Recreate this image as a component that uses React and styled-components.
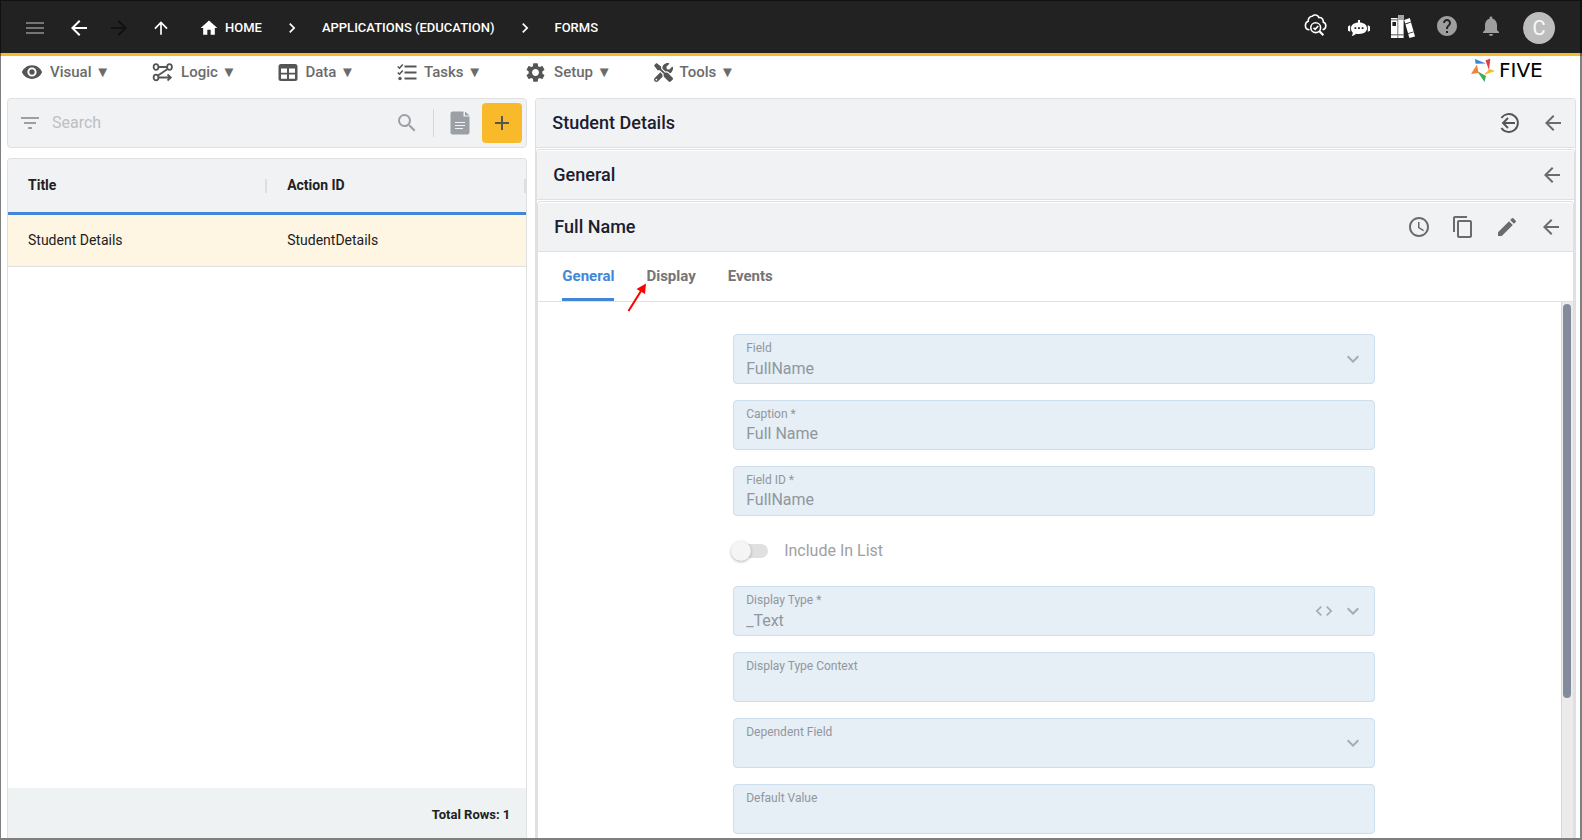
import React from 'react'
import styled, { createGlobalStyle } from 'styled-components'
import {
    MdMenu, MdArrowBack, MdArrowForward, MdArrowUpward, MdHome, MdChevronRight, MdHelp,
    MdNotifications, MdFilterList, MdSearch, MdAdd, MdAccessTime, MdContentCopy, MdEdit,
    MdExpandMore, MdCode, MdVisibility, MdSettings
} from 'react-icons/md'
import { FaTools } from 'react-icons/fa'

const GlobalStyle = createGlobalStyle`
    * {
        box-sizing: border-box;
    }
    body {
        margin: 0;
        background: #fff;
        font-family: Roboto, sans-serif;
        color: #212121;
    }
    button, input, select {
        font-family: inherit;
        margin: 0;
    }
    svg {
        display: block;
        flex-shrink: 0;
    }
`

const Page = styled.div`
    display: flex;
    flex-direction: column;
    height: 100vh;
    overflow: hidden;
    &::after {
        content: '';
        position: fixed;
        inset: 0;
        border: solid rgba(0, 0, 0, 0.5);
        border-width: 1px 2px 2px 1px;
        pointer-events: none;
    }
`

const TopBar = styled.header`
    display: flex;
    align-items: center;
    justify-content: space-between;
    height: 56px;
    flex-shrink: 0;
    padding: 2px 27px 0 23px;
    background: #222;
    border-bottom: 3px solid #f8b92b;
    color: #fff;
`

const NavIcons = styled.nav`
    display: flex;
    align-items: center;
    gap: 20px;
`

const HistoryIcons = styled.div`
    display: flex;
    gap: 16px;
`

const IconButton = styled.button`
    display: flex;
    align-items: center;
    justify-content: center;
    min-width: 20px;
    height: 24px;
    padding: 0;
    border: 0;
    background: none;
    color: ${props => props.$color || '#6b6b6b'};
`

const Crumbs = styled.div`
    display: flex;
    align-items: center;
    gap: 20px;
    padding-left: 8px;
`

const Crumb = styled.a`
    display: flex;
    align-items: center;
    gap: 6px;
    color: #fff;
    font-size: 13px;
    font-weight: 500;
    line-height: 20px;
    text-decoration: none;
`

const TopActions = styled.div`
    display: flex;
    align-items: center;
    gap: 20px;
`

const ActionIcons = styled.div`
    display: flex;
    gap: 20px;
    padding-bottom: 4px;
`

const Avatar = styled.button`
    width: 32px;
    height: 32px;
    padding: 0;
    border: 0;
    border-radius: 50%;
    background: #bdbdbd;
    color: #fafafa;
    font-size: 20px;
    line-height: 32px;
`

const MenuBar = styled.nav`
    display: flex;
    align-items: center;
    height: 34px;
    flex-shrink: 0;
    padding: 0 24px 2px 21px;
    gap: 42px;
`

const MenuButton = styled.button`
    display: flex;
    align-items: center;
    gap: 7px;
    padding: 0;
    border: 0;
    background: none;
    color: #6b6b6b;
    font-size: 15px;
    font-weight: 500;
    line-height: 20px;
    svg {
        color: #555;
    }
`

const Logo = styled.a`
    display: flex;
    align-items: center;
    gap: 4px;
    width: 87px;
    margin-left: auto;
    padding-bottom: 4px;
    color: #000;
    font-family: 'DejaVu Sans', sans-serif;
    font-size: 20px;
    line-height: 24px;
    text-decoration: none;
`

const Workspace = styled.main`
    display: grid;
    grid-template-columns: 1fr 2fr;
    gap: 8px;
    flex: 1;
    min-height: 0;
    padding: 8px 6px 2px 7px;
`

const ListSide = styled.section`
    display: flex;
    flex-direction: column;
    gap: 10px;
    min-width: 0;
    min-height: 0;
`

const SearchBar = styled.div`
    display: flex;
    align-items: center;
    height: 50px;
    flex-shrink: 0;
    padding: 0 4px 0 10px;
    border: 1px solid #e0e0e0;
    border-radius: 4px;
    background: #f1f2f4;
    color: #9aa0a6;
`

const SearchInput = styled.input`
    flex: 1;
    min-width: 0;
    padding: 0 10px;
    border: 0;
    outline: 0;
    background: none;
    font-size: 16px;
    line-height: 24px;
    &::placeholder {
        color: #bdbfc2;
        opacity: 1;
    }
`

const Divider = styled.span`
    width: 1px;
    height: 28px;
    margin: 0 16px 0 14px;
    background: #d5d7da;
`

const AddButton = styled.button`
    display: flex;
    align-items: center;
    justify-content: center;
    width: 40px;
    height: 40px;
    margin-left: 12px;
    padding: 0;
    border: 0;
    border-radius: 4px;
    background: #f8b92b;
    color: #555;
`

const TableCard = styled.div`
    display: flex;
    flex-direction: column;
    flex: 1;
    min-height: 0;
    border: 1px solid #e0e0e0;
    border-bottom: 0;
    border-radius: 4px 4px 0 0;
    overflow: hidden;
`

const Table = styled.table`
    width: 100%;
    border-collapse: separate;
    border-spacing: 0;
    table-layout: fixed;
    font-size: 14px;
    line-height: 20px;
    text-align: left;
    th, td {
        padding: 0 20px 2px;
    }
    th {
        height: 56px;
        background: linear-gradient(#dcdee0, #dcdee0) right center / 2px 14px no-repeat #f1f2f4;
        border-bottom: 3px solid #4286d9;
        font-weight: 700;
    }
    td {
        height: 52px;
        background: #fff5e3;
        border-bottom: 1px solid #e0e0e0;
    }
`

const TableFooter = styled.div`
    display: flex;
    align-items: center;
    justify-content: flex-end;
    height: 50px;
    margin-top: auto;
    padding: 4px 16px 0;
    background: #eef2f3;
    font-size: 13px;
    font-weight: 700;
    line-height: 20px;
`

const Panel = styled.section`
    display: flex;
    flex-direction: column;
    flex: 1;
    min-width: 0;
    min-height: 0;
    margin-top: ${props => props.$nested ? '1px' : '0'};
    border: 1px solid #e0e0e0;
    border-bottom: 0;
    border-radius: 4px 4px 0 0;
`

const PanelHeader = styled.div`
    display: flex;
    align-items: center;
    justify-content: space-between;
    height: 49px;
    flex-shrink: 0;
    margin-top: ${props => props.$nested ? '1px' : '0'};
    padding: 0 10px 0 16px;
    background: #f1f2f4;
    border-bottom: 1px solid #e0e0e0;
    border-radius: 4px 4px 0 0;
`

const PanelTitle = styled.h2`
    margin: 0;
    color: #1b2030;
    font-size: 18px;
    font-weight: 500;
    line-height: 24px;
`

const PanelActions = styled.div`
    display: flex;
    gap: 20px;
`

const Tabs = styled.div`
    position: relative;
    display: flex;
    gap: 32px;
    height: 50px;
    flex-shrink: 0;
    padding: 0 24px;
    border-bottom: 1px solid #e0e0e0;
`

const Tab = styled.button`
    padding: 0 0 2px;
    border: 0;
    border-radius: 2px 2px 0 0;
    background: ${props => props.$active ? 'linear-gradient(#4286d9, #4286d9) bottom / 100% 3px no-repeat' : 'none'};
    color: ${props => props.$active ? '#4286d9' : '#757575'};
    font-size: 15px;
    font-weight: 700;
    line-height: 20px;
`

const Pointer = styled.svg`
    position: absolute;
    left: 88px;
    top: 30px;
`

const ScrollArea = styled.div`
    display: flex;
    flex: 1;
    min-height: 0;
`

const FormWrap = styled.div`
    flex: 1;
    min-width: 0;
    padding: 32px 15px 0 24px;
    overflow: hidden;
`

const Form = styled.form`
    display: flex;
    flex-direction: column;
    gap: 16px;
    max-width: 642px;
    margin: 0 auto;
`

const ScrollTrack = styled.div`
    width: 12px;
    padding: 2px 1px;
    background: #ebebeb;
    border-left: 1px solid #d8d8d8;
`

const ScrollThumb = styled.div`
    width: 8px;
    height: 74%;
    border-radius: 4px;
    background: #848c9b;
`

const FieldBox = styled.div`
    display: flex;
    align-items: center;
    gap: 7px;
    height: 50px;
    flex-shrink: 0;
    padding: 0 9px 0 12px;
    border: 1px solid #cddeee;
    border-radius: 4px;
    background: #e6eef6;
    color: #a4abb3;
`

const FieldLabel = styled.label`
    display: flex;
    flex-direction: column;
    align-self: flex-start;
    flex: 1;
    padding-top: 5px;
    color: #91979d;
    font-size: 12px;
    line-height: 16px;
`

const FieldInput = styled.input`
    width: 100%;
    height: 24px;
    padding: 0;
    border: 0;
    background: none;
    color: #91979d;
    font-size: 16px;
    line-height: 24px;
`

const FieldSelect = styled.select`
    width: 100%;
    height: 26px;
    padding: 0;
    border: 0;
    appearance: none;
    background: none;
    color: #91979d;
    opacity: 1;
    font-size: 16px;
    line-height: 24px;
`

const SwitchLabel = styled.label`
    display: flex;
    align-items: center;
    gap: 16px;
    height: 38px;
    color: #a0a0a0;
    font-size: 16px;
    line-height: 24px;
`

const Switch = styled.input`
    appearance: none;
    position: relative;
    width: 34px;
    height: 14px;
    margin: 0 0 0 1px;
    border-radius: 7px;
    background: #e0e0e0;
    &::before {
        content: '';
        position: absolute;
        left: -3px;
        top: -3px;
        width: 20px;
        height: 20px;
        border-radius: 50%;
        background: #f5f5f5;
        box-shadow: 0 1px 3px rgba(0, 0, 0, 0.3);
    }
`

const LogicIcon = () => (
    <svg width='22' height='20' viewBox='0 0 22 20' fill='none' stroke='currentColor' strokeWidth='1.8'>
        <ellipse cx='4' cy='5' rx='2.4' ry='2.9' />
        <ellipse cx='17.5' cy='5' rx='2.4' ry='2.9' />
        <ellipse cx='4' cy='15.5' rx='2.4' ry='2.9' />
        <path d='M6.4 5H15M15.6 7L6 13.6M6.4 15.5H18M15.5 12.5L18.8 15.5L15.5 18.5' />
    </svg>
)

const TableIcon = () => (
    <svg width='20' height='20' viewBox='0 0 20 20'>
        <rect x='0.5' y='2' width='19' height='17' rx='2.5' fill='currentColor' />
        <path d='M3 6.5H9V10.8H3zM11 6.5H17V10.8H11zM3 12.6H9V16.8H3zM11 12.6H17V16.8H11z' fill='#fff' />
    </svg>
)

const TasksIcon = () => (
    <svg width='20' height='20' viewBox='0 0 20 20' fill='none' stroke='currentColor'>
        <path d='M7.5 4.5H19.5M7.5 10.5H19.5M7.5 16.5H19.5' strokeWidth='2' />
        <path d='M0.8 4.5L2.5 6.2L5.8 2.4M0.8 10.5L2.5 12.2L5.8 8.4' strokeWidth='1.6' />
        <circle cx='3' cy='16.5' r='1.7' fill='currentColor' stroke='none' />
    </svg>
)

const CloudSearchIcon = () => (
    <svg width='24' height='24' viewBox='0 0 24 24' fill='none' stroke='currentColor' strokeWidth='1.6'>
        <path d='M6.5 15.8C4 15.8 2.4 14 2.4 11.6C2.4 9.4 3.6 7.8 5.2 7.3C5 4.4 6.8 2.3 9.2 2.2C11.2 0.2 14.8 0.6 16 3.6C18.8 3.3 20.6 5.4 20.2 8C22 8.8 23 10.4 22.8 12.2C22.6 14.2 21.2 15.5 19.6 15.8' />
        <circle cx='12.7' cy='13.7' r='4.9' />
        <path d='M16.4 17.3L20.4 21.2' strokeWidth='2.2' />
        <path d='M10.5 13.8L12.2 15.4L15.2 12' />
    </svg>
)

const BotIcon = () => (
    <svg width='24' height='24' viewBox='0 0 24 24' fill='currentColor'>
        <path d='M11 6H13V10H11z' />
        <path d='M12 8.5C17 8.5 20 10.8 20 14.3C20 17.8 17 20 12 20C10.8 20 9.8 19.9 8.8 19.7C7.8 21 6.4 21.8 4.6 22C5.3 21.2 5.7 20 5.8 18.8C4.6 17.6 4 16.1 4 14.3C4 10.8 7 8.5 12 8.5z' />
        <path d='M1 12.5L3.2 11V17.8L1 16.8zM20.8 11L23 12.5V16.8L20.8 17.8z' />
        <path d='M7.5 13.2H9.3V15H7.5zM11.1 13.2H12.9V15H11.1zM14.7 13.2H16.5V15H14.7z' fill='#222' />
    </svg>
)

const BooksIcon = () => (
    <svg width='24' height='24' viewBox='0 0 24 24' fill='currentColor'>
        <path d='M0 4H6.6V24.6H0zM7.2 1H12.6V24H7.2z' />
        <path d='M13.2 6L18.8 4L24 22.4L18.4 24z' />
        <path d='M7.2 1H12.6V6H7.2z' fill='#a5a5a5' />
        <path d='M1.4 8H5V12H1.4zM0 20.5H6.6V21.3H0zM0 5.6H6.6V6.2H0zM7.2 20.5H12.6V21.3H7.2zM14.1 9.6L19.7 7.8L19.9 8.6L14.3 10.4zM16.9 19.2L22.4 17.5L22.6 18.3L17.1 20z' fill='#222' />
    </svg>
)

const DocIcon = () => (
    <svg width='20' height='24' viewBox='0 0 20 24'>
        <path d='M2.5 0.5H13.5V5.5H19.5V21.5Q19.5 23.5 17.5 23.5H2.5Q0.5 23.5 0.5 21.5V2.5Q0.5 0.5 2.5 0.5z' fill='currentColor' />
        <path d='M15 0.5L19.5 4.5H15z' fill='currentColor' />
        <path d='M5 11.5H15M5 14.5H15M5 17.5H13' stroke='#f1f2f4' strokeWidth='1.2' />
    </svg>
)

const ExitIcon = () => (
    <svg width='24' height='24' viewBox='0 0 24 24' fill='none' stroke='#555' strokeWidth='1.9'>
        <path d='M4.4 7A9 9 0 1 1 4.4 17' />
        <path d='M18 12H6M11 7L6 12L11 17' />
    </svg>
)

const FiveMark = () => (
    <svg width='24' height='24' viewBox='0 0 24 24'>
        <path d='M4 1L15 5.5L4.5 5.8z' fill='#3f83d8' />
        <path d='M19.3 0.5L18 12L14.5 2.5z' fill='#e23c3c' />
        <path d='M24 13L13 17L18.5 11z' fill='#f8b92b' />
        <path d='M6 13L15 18L13.5 24z' fill='#3fae5a' />
        <path d='M0 16L6 6.5L7.5 15z' fill='#f58232' />
    </svg>
)

const menus = [
    { name: 'Visual', icon: <MdVisibility size={22} /> },
    { name: 'Logic', icon: <LogicIcon /> },
    { name: 'Data', icon: <TableIcon /> },
    { name: 'Tasks', icon: <TasksIcon /> },
    { name: 'Setup', icon: <MdSettings size={23} /> },
    { name: 'Tools', icon: <FaTools size={19} /> }
]

const Field = ({ id, label, value, select, code }) => (
    <FieldBox>
        <FieldLabel htmlFor={id}>
            {label}
            {select
                ? <FieldSelect id={id} disabled><option>{value}</option></FieldSelect>
                : <FieldInput id={id} defaultValue={value} disabled />}
        </FieldLabel>
        {code && <MdCode size={20} />}
        {select && <MdExpandMore size={24} />}
    </FieldBox>
)

const BackButton = () => <IconButton aria-label='Back'><MdArrowBack size={24} /></IconButton>

class App extends React.Component {
    state = {
        search: '',
        tab: 'General'
    }

    onChangeSearch = (event) => {
        this.setState({ search: event.target.value })
    }

    render() {
        const tabs = ['General', 'Display', 'Events'].map((name) => (
            <Tab key={name} $active={this.state.tab === name} onClick={() => this.setState({ tab: name })}>{name}</Tab>
        ))
        return (
            <Page>
                <GlobalStyle />
                <TopBar>
                    <NavIcons>
                        <IconButton aria-label='Menu' $color='#757575'><MdMenu size={24} /></IconButton>
                        <HistoryIcons>
                            <IconButton aria-label='Back' $color='#fff'><MdArrowBack size={24} /></IconButton>
                            <IconButton aria-label='Forward' $color='#111'><MdArrowForward size={24} /></IconButton>
                        </HistoryIcons>
                        <IconButton aria-label='Up' $color='#fff'><MdArrowUpward size={20} /></IconButton>
                        <Crumbs>
                            <Crumb href='#home'><MdHome size={20} />HOME</Crumb>
                            <MdChevronRight size={20} />
                            <Crumb href='#applications'>APPLICATIONS (EDUCATION)</Crumb>
                            <MdChevronRight size={20} />
                            <Crumb href='#forms'>FORMS</Crumb>
                        </Crumbs>
                    </NavIcons>
                    <TopActions>
                        <ActionIcons>
                            <IconButton aria-label='Inspect' $color='#fff'><CloudSearchIcon /></IconButton>
                            <IconButton aria-label='Assistant' $color='#fff'><BotIcon /></IconButton>
                            <IconButton aria-label='Library' $color='#fff'><BooksIcon /></IconButton>
                            <IconButton aria-label='Help' $color='#9e9e9e'><MdHelp size={24} /></IconButton>
                            <IconButton aria-label='Notifications' $color='#9e9e9e'><MdNotifications size={24} /></IconButton>
                        </ActionIcons>
                        <Avatar>C</Avatar>
                    </TopActions>
                </TopBar>
                <MenuBar>
                    {menus.map((menu) => (
                        <MenuButton key={menu.name}>{menu.icon}<span>{menu.name} ▼</span></MenuButton>
                    ))}
                    <Logo href='#five'><FiveMark />FIVE</Logo>
                </MenuBar>
                <Workspace>
                    <ListSide>
                        <SearchBar>
                            <MdFilterList size={24} />
                            <SearchInput aria-label='Search' placeholder='Search' value={this.state.search} onChange={this.onChangeSearch} />
                            <MdSearch size={24} />
                            <Divider />
                            <IconButton aria-label='Report' $color='#9aa0a6'><DocIcon /></IconButton>
                            <AddButton aria-label='Add'><MdAdd size={24} /></AddButton>
                        </SearchBar>
                        <TableCard>
                            <Table>
                                <thead>
                                    <tr><th>Title</th><th>Action ID</th></tr>
                                </thead>
                                <tbody>
                                    <tr><td>Student Details</td><td>StudentDetails</td></tr>
                                </tbody>
                            </Table>
                            <TableFooter>Total Rows: 1</TableFooter>
                        </TableCard>
                    </ListSide>
                    <Panel>
                        <PanelHeader>
                            <PanelTitle>Student Details</PanelTitle>
                            <PanelActions>
                                <IconButton aria-label='Exit'><ExitIcon /></IconButton>
                                <BackButton />
                            </PanelActions>
                        </PanelHeader>
                        <Panel $nested>
                            <PanelHeader $nested>
                                <PanelTitle>General</PanelTitle>
                                <BackButton />
                            </PanelHeader>
                            <Panel $nested>
                                <PanelHeader $nested>
                                    <PanelTitle>Full Name</PanelTitle>
                                    <PanelActions>
                                        <IconButton aria-label='History'><MdAccessTime size={24} /></IconButton>
                                        <IconButton aria-label='Copy'><MdContentCopy size={24} /></IconButton>
                                        <IconButton aria-label='Edit'><MdEdit size={24} /></IconButton>
                                        <BackButton />
                                    </PanelActions>
                                </PanelHeader>
                                <Tabs>
                                    {tabs}
                                    <Pointer width='24' height='32' viewBox='0 0 24 32'>
                                        <path d='M2.5 29L15 9' stroke='#f00' strokeWidth='2' />
                                        <path d='M20 1.5L19 12L10.5 7z' fill='#f00' />
                                    </Pointer>
                                </Tabs>
                                <ScrollArea>
                                    <FormWrap>
                                        <Form>
                                            <Field id='field' label='Field' value='FullName' select />
                                            <Field id='caption' label='Caption *' value='Full Name' />
                                            <Field id='fieldId' label='Field ID *' value='FullName' />
                                            <SwitchLabel><Switch type='checkbox' disabled />Include In List</SwitchLabel>
                                            <Field id='displayType' label='Display Type *' value='_Text' select code />
                                            <Field id='context' label='Display Type Context' value='' />
                                            <Field id='dependent' label='Dependent Field' value='' select />
                                            <Field id='default' label='Default Value' value='' />
                                        </Form>
                                    </FormWrap>
                                    <ScrollTrack><ScrollThumb /></ScrollTrack>
                                </ScrollArea>
                            </Panel>
                        </Panel>
                    </Panel>
                </Workspace>
            </Page>
        )
    }
}

export default App
